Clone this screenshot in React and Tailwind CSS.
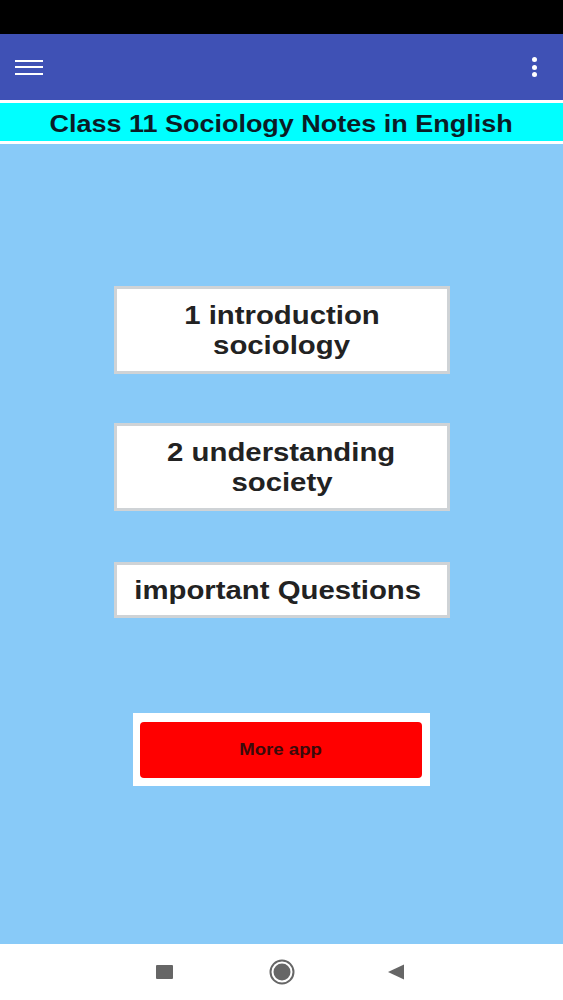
import React from "react";

function Box({ children, className = "" }) {
  return (
    <div
      className={
        "w-[336px] bg-white border-[3px] border-[#cfd3d6] flex flex-col items-center justify-center text-[#222222] font-bold text-[25.5px] leading-[30px] text-center " +
        className
      }
      style={{ fontFamily: "'Liberation Sans', Arial, sans-serif" }}
    >
      {children}
    </div>
  );
}

export default function App() {
  return (
    <div className="w-[563px] h-[1000px] flex flex-col overflow-hidden">
      <div className="h-[34px] bg-black shrink-0" />
      <div className="h-[66px] bg-[#3f51b5] shrink-0 flex items-center justify-between pl-[15px] pr-[26px]">
        <div className="flex flex-col gap-[4.5px] w-[28px]">
          <div className="h-[2px] bg-white" />
          <div className="h-[2px] bg-white" />
          <div className="h-[2px] bg-white" />
        </div>
        <div className="flex flex-col gap-[2.5px] items-center">
          <div className="w-[5px] h-[5px] rounded-full bg-white" />
          <div className="w-[5px] h-[5px] rounded-full bg-white" />
          <div className="w-[5px] h-[5px] rounded-full bg-white" />
        </div>
      </div>
      <div className="h-[3px] bg-white shrink-0" />
      <div
        className="h-[38px] bg-[#00ffff] shrink-0 flex items-center justify-center pt-[3px] text-[24px] font-bold text-[#0b1c26]"
        style={{ fontFamily: "'Liberation Sans', Arial, sans-serif" }}
      >
        <span className="inline-block scale-x-[1.124] whitespace-nowrap">Class 11 Sociology Notes in English</span>
      </div>
      <div className="h-[3px] bg-white shrink-0" />
      <div className="flex-1 bg-[#88caf8] flex flex-col items-center">
        <Box className="mt-[142px] h-[88px]">
          <span className="inline-block scale-x-[1.15] whitespace-nowrap">1 introduction</span>
          <span className="inline-block scale-x-[1.15] whitespace-nowrap">sociology</span>
        </Box>
        <Box className="mt-[49px] h-[88px]">
          <span className="inline-block scale-x-[1.15] whitespace-nowrap">2 understanding</span>
          <span className="inline-block scale-x-[1.15] whitespace-nowrap">society</span>
        </Box>
        <Box className="mt-[51px] h-[56px] pr-[8px]">
          <span className="inline-block scale-x-[1.15] whitespace-nowrap">important Questions</span>
        </Box>
        <div className="mt-[95px] w-[297px] h-[73px] bg-white pt-[9px] pb-[8px] pl-[7px] pr-[8px]">
          <div
            className="w-full h-full bg-[#ff0000] rounded-[4px] flex items-center justify-center text-[16px] font-bold text-[#3a0a0a]"
            style={{ fontFamily: "'Liberation Sans', Arial, sans-serif" }}
          >
            <span className="inline-block scale-x-[1.16] whitespace-nowrap">More app</span>
          </div>
        </div>
      </div>
      <div className="h-[56px] bg-white shrink-0 relative">
        <div className="absolute left-[156px] top-[21px] w-[17px] h-[14px] bg-[#666666] rounded-[1px]" />
        <svg className="absolute left-[269px] top-[15px]" width="26" height="26" viewBox="0 0 26 26">
          <circle cx="13" cy="13" r="11.5" fill="none" stroke="#666666" strokeWidth="2" />
          <circle cx="13" cy="13" r="8.5" fill="#666666" />
        </svg>
        <svg className="absolute left-[388px] top-[20px]" width="17" height="16" viewBox="0 0 17 16">
          <path d="M0 8 L16 0.5 L16 15.5 Z" fill="#666666" />
        </svg>
      </div>
    </div>
  );
}
